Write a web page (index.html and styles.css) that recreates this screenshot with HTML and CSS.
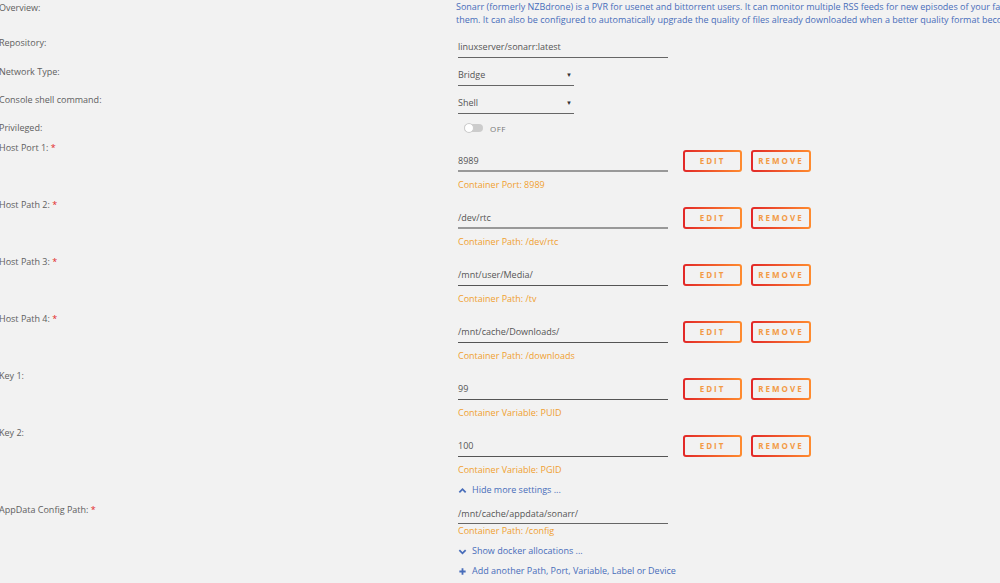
FILE: index.html
```html
<!DOCTYPE html>
<html lang="en">
<head>
    <meta charset="UTF-8">
    <title>Add Container</title>
    <link rel="stylesheet" href="styles.css">
</head>
<body>
    <div class="form">
        <div class="row">
            <div class="label">Overview:</div>
            <div class="value desc">
                <div>Sonarr (formerly NZBdrone) is a PVR for usenet and bittorrent users. It can monitor multiple RSS feeds for new episodes of your favorite shows and will grab, sort and rename</div>
                <div>them. It can also be configured to automatically upgrade the quality of files already downloaded when a better quality format becomes available.</div>
            </div>
        </div>

        <div class="row field first">
            <div class="label">Repository:</div>
            <div class="value"><div class="input">linuxserver/sonarr:latest</div></div>
        </div>
        <div class="row field">
            <div class="label">Network Type:</div>
            <div class="value"><div class="select">Bridge<span class="arrow">&#9660;</span></div></div>
        </div>
        <div class="row field">
            <div class="label">Console shell command:</div>
            <div class="value"><div class="select">Shell<span class="arrow">&#9660;</span></div></div>
        </div>
        <div class="row field switch-row">
            <div class="label">Privileged:</div>
            <div class="value"><div class="switch"><span class="track"><span class="knob"></span></span>OFF</div></div>
        </div>

        <div class="row config light">
            <div class="label">Host Port 1: <span class="req">*</span></div>
            <div class="value">
                <div class="line"><div class="input">8989</div><a class="btn">EDIT</a><a class="btn">REMOVE</a></div>
                <div class="hint">Container Port: 8989</div>
            </div>
        </div>
        <div class="row config light">
            <div class="label">Host Path 2: <span class="req">*</span></div>
            <div class="value">
                <div class="line"><div class="input">/dev/rtc</div><a class="btn">EDIT</a><a class="btn">REMOVE</a></div>
                <div class="hint">Container Path: /dev/rtc</div>
            </div>
        </div>
        <div class="row config">
            <div class="label">Host Path 3: <span class="req">*</span></div>
            <div class="value">
                <div class="line"><div class="input">/mnt/user/Media/</div><a class="btn">EDIT</a><a class="btn">REMOVE</a></div>
                <div class="hint">Container Path: /tv</div>
            </div>
        </div>
        <div class="row config">
            <div class="label">Host Path 4: <span class="req">*</span></div>
            <div class="value">
                <div class="line"><div class="input">/mnt/cache/Downloads/</div><a class="btn">EDIT</a><a class="btn">REMOVE</a></div>
                <div class="hint">Container Path: /downloads</div>
            </div>
        </div>
        <div class="row config">
            <div class="label">Key 1:</div>
            <div class="value">
                <div class="line"><div class="input">99</div><a class="btn">EDIT</a><a class="btn">REMOVE</a></div>
                <div class="hint">Container Variable: PUID</div>
            </div>
        </div>
        <div class="row config">
            <div class="label">Key 2:</div>
            <div class="value">
                <div class="line"><div class="input">100</div><a class="btn">EDIT</a><a class="btn">REMOVE</a></div>
                <div class="hint">Container Variable: PGID</div>
            </div>
        </div>

        <div class="row">
            <div class="label"></div>
            <div class="value"><a class="link"><svg viewBox="0 0 10 10"><path d="M1.5 7 L5 3.5 L8.5 7" /></svg>Hide more settings ...</a></div>
        </div>

        <div class="row appdata">
            <div class="label">AppData Config Path: <span class="req">*</span></div>
            <div class="value">
                <div class="input">/mnt/cache/appdata/sonarr/</div>
                <div class="hint">Container Path: /config</div>
            </div>
        </div>

        <div class="row link-row">
            <div class="label"></div>
            <div class="value"><a class="link"><svg viewBox="0 0 10 10"><path d="M1.5 3.5 L5 7 L8.5 3.5" /></svg>Show docker allocations ...</a></div>
        </div>
        <div class="row link-row">
            <div class="label"></div>
            <div class="value"><a class="link"><svg viewBox="0 0 10 10"><path d="M5 1.5 V8.5 M1.5 5 H8.5" /></svg>Add another Path, Port, Variable, Label or Device</a></div>
        </div>
    </div>
</body>
</html>
```

FILE: styles.css
```css
* {
    margin: 0;
    padding: 0;
    box-sizing: border-box;
}

body {
    background: #f2f2f2;
    font-family: "Open Sans", "Noto Sans", sans-serif;
    font-size: 9px;
    color: #555;
    overflow: hidden;
}

.form {
    padding-top: 1px;
    margin-left: -1px;
}

.row {
    display: flex;
    align-items: flex-start;
}

.label {
    width: 459px;
    flex-shrink: 0;
    line-height: 14px;
    color: #606060;
}
.req {
    color: #e22828;
}

.value {
    flex: 1;
    min-width: 0;
}

.desc {
    margin-top: -1px;
    line-height: 13px;
    color: #486dba;
    white-space: nowrap;
    margin-left: -2px;
}

.field.first {
    margin-top: 10px;
}
.field {
    margin-top: 7px;
}
.switch-row {
    margin-bottom: 6px;
}

.input {
    width: 210px;
    height: 22px;
    line-height: 21px;
    border-bottom: 1px solid #666;
    color: #555;
}

.select {
    width: 116px;
    height: 21px;
    line-height: 20px;
    border-bottom: 1px solid #666;
    position: relative;
}
.select .arrow {
    position: absolute;
    right: 2px;
    top: 0;
    font-size: 6px;
    color: #333;
}

.switch {
    display: flex;
    align-items: center;
    height: 14px;
    padding-left: 6px;
    font-size: 8px;
    letter-spacing: 0.5px;
    color: #777;
}
.track {
    width: 19px;
    height: 8px;
    border-radius: 4px;
    background: #ccc;
    margin-right: 7px;
    position: relative;
}
.knob {
    position: absolute;
    left: 0;
    top: -1px;
    width: 10px;
    height: 10px;
    border-radius: 50%;
    background: #fff;
    border: 1px solid #ccc;
}

.config {
    height: 57px;
}
.config .value {
    padding-top: 9px;
}
.config .input {
    border-bottom: 1px solid #555;
}
.config.light .input {
    border-bottom: 2px solid #999;
}

.line {
    display: flex;
    align-items: flex-start;
}

.btn {
    height: 22px;
    line-height: 18px;
    margin-left: 15px;
    width: 59px;
    text-align: center;
    font-size: 8px;
    font-weight: bold;
    letter-spacing: 2px;
    color: #f39a45;
    border: 2px solid transparent;
    border-radius: 3px;
    background: linear-gradient(#f2f2f2, #f2f2f2) padding-box,
                linear-gradient(90deg, #e22828, #ff8c2f) border-box;
}
.btn + .btn {
    margin-left: 9px;
    width: 60px;
}

.hint {
    margin-top: 6px;
    line-height: 14px;
    color: #f0a030;
}

.link {
    display: flex;
    align-items: center;
    line-height: 14px;
    color: #486dba;
}
.link svg {
    width: 9px;
    height: 9px;
    margin-right: 5px;
    fill: none;
    stroke: #486dba;
    stroke-width: 2;
}

.appdata {
    margin-top: 6px;
}
.appdata .value {
    padding-top: 1px;
}
.appdata .input {
    height: 20px;
    line-height: 19px;
}
.appdata .hint {
    margin-top: 0;
}

.link-row {
    margin-top: 6px;
}
```
